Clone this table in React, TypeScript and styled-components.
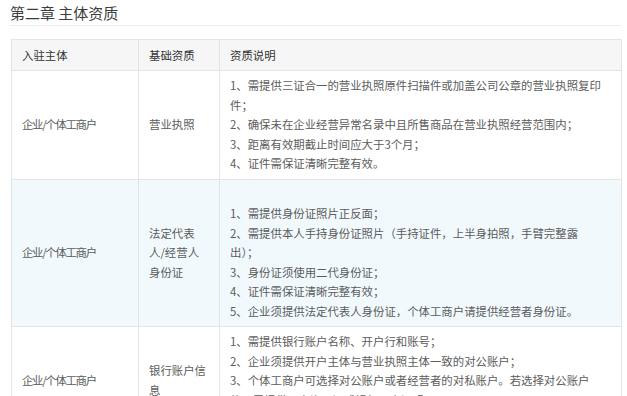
import styled, { createGlobalStyle } from 'styled-components';

const GlobalStyle = createGlobalStyle`
  html, body {
    margin: 0;
    padding: 0;
    background: #ffffff;
  }
  body {
    font-family: "Noto Sans CJK SC", "Noto Sans", sans-serif;
  }
`;

const Page = styled.div`
  width: 627px;
  height: 396px;
  overflow: hidden;
  padding: 0 6px 0 10px;
  box-sizing: border-box;
`;

const Title = styled.h2`
  margin: 0;
  height: 26px;
  font-size: 15px;
  line-height: 26px;
  font-weight: 400;
  color: #3d3d3d;
  border-bottom: 1px solid #ececec;
  box-sizing: border-box;
`;

const Table = styled.table`
  margin: 13px 0 0 1px;
  width: 610px;
  border-collapse: collapse;
  table-layout: fixed;
  font-size: 11.4px;
  color: #5c5c5c;
`;

const HeadCell = styled.th`
  height: 30px;
  padding: 0 10px;
  text-align: left;
  font-weight: 400;
  color: #333;
  background: #f6f6f7;
  border: 1px solid #e4e4e4;
`;

const Row = styled.tr<{ $tint?: boolean }>`
  background: ${(p) => (p.$tint ? '#f1f9fc' : '#ffffff')};
`;

const Cell = styled.td<{ $narrow?: boolean }>`
  padding: 5px ${(p) => (p.$narrow ? '11px' : '18px')} 5px 10px;
  line-height: 19.5px;
  vertical-align: middle;
  border: 1px solid #e4e4e4;
  word-break: normal;
`;

const SubjectCell = styled(Cell)`
  letter-spacing: -1.3px;
`;

const Line = styled.p`
  margin: 0;
`;

type Item = {
  subject: string;
  basis: string;
  lines: string[];
  tint?: boolean;
};

const items: Item[] = [
  {
    subject: '企业/个体工商户',
    basis: '营业执照',
    lines: [
      '1、需提供三证合一的营业执照原件扫描件或加盖公司公章的营业执照复印件；',
      '2、确保未在企业经营异常名录中且所售商品在营业执照经营范围内；',
      '3、距离有效期截止时间应大于3个月；',
      '4、证件需保证清晰完整有效。',
    ],
  },
  {
    subject: '企业/个体工商户',
    basis: '法定代表人/经营人身份证',
    tint: true,
    lines: [
      '',
      '1、需提供身份证照片正反面；',
      '2、需提供本人手持身份证照片（手持证件，上半身拍照，手臂完整露出）；',
      '3、身份证须使用二代身份证；',
      '4、证件需保证清晰完整有效；',
      '5、企业须提供法定代表人身份证，个体工商户请提供经营者身份证。',
    ],
  },
  {
    subject: '企业/个体工商户',
    basis: '银行账户信息',
    lines: [
      '1、需提供银行账户名称、开户行和账号；',
      '2、企业须提供开户主体与营业执照主体一致的对公账户；',
      '3、个体工商户可选择对公账户或者经营者的对私账户。若选择对公账户的，需提供开户许可证或银行开户证明；',
      '4、证件需保证清晰完整有效。',
    ],
  },
];

const App = () => {
  return (
    <Page>
      <GlobalStyle />
      <Title>第二章 主体资质</Title>
      <Table>
        <colgroup>
          <col style={{ width: 127 }} />
          <col style={{ width: 81 }} />
          <col style={{ width: 402 }} />
        </colgroup>
        <thead>
          <tr>
            <HeadCell>入驻主体</HeadCell>
            <HeadCell>基础资质</HeadCell>
            <HeadCell>资质说明</HeadCell>
          </tr>
        </thead>
        <tbody>
          {items.map((item, i) => (
            <Row key={i} $tint={item.tint}>
              <SubjectCell $narrow>{item.subject}</SubjectCell>
              <Cell $narrow>{item.basis}</Cell>
              <Cell>
                {item.lines.map((line, j) => (
                  <Line key={j}>{line || '\u00a0'}</Line>
                ))}
              </Cell>
            </Row>
          ))}
        </tbody>
      </Table>
    </Page>
  );
};

export default App;
